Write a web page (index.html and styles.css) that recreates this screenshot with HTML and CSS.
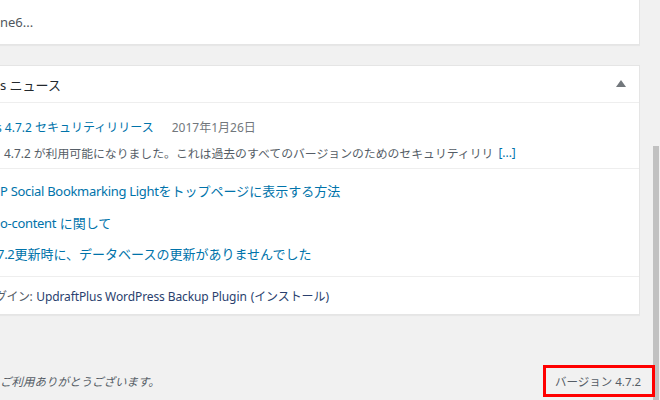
FILE: index.html
```html
<!DOCTYPE html>
<html lang="ja">
<head>
<meta charset="utf-8">
<link rel="stylesheet" href="styles.css">
</head>
<body>
<div class="page">
  <div class="main">
    <div class="card top-card">
      <span class="clip">ne6...</span>
    </div>
    <div class="card news">
      <div class="news-head">
        <h2 class="news-title"><span class="clip">s ニュース</span></h2>
        <svg class="toggle" width="10" height="7" viewBox="0 0 10 7"><path d="M0 7 L5 0 L10 7 Z" fill="#72777c"/></svg>
      </div>
      <div class="news-main">
        <div class="row-line">
          <a class="link" href="#"><span class="frag">s</span> 4.7.2 セキュリティリリース</a>
          <span class="date">2017年1月26日</span>
        </div>
        <div class="row-line desc">
          <span class="clip-d">4.7.2 が利用可能になりました。これは過去のすべてのバージョンのためのセキュリティリリ</span> <a class="more" href="#">[...]</a>
        </div>
      </div>
      <ul class="news-list">
        <li><a class="link" href="#"><span class="latin">P Social Bookmarking Light</span>をトップページに表示する方法</a></li>
        <li><a class="link" href="#"><span class="latin">o-content</span> に関して</a></li>
        <li><a class="link" href="#"><span class="latin cut">7.2</span>更新時に、データベースの更新がありませんでした</a></li>
      </ul>
      <div class="news-plugin">
        <span class="prefix">グイン:</span><a class="plugin-link" href="#">UpdraftPlus WordPress Backup Plugin</a> <a class="plugin-link install" href="#">(インストール)</a>
      </div>
    </div>
  </div>
  <div class="footer">
    <span class="thanks">ご利用ありがとうございます。</span>
    <span class="version">バージョン 4.7.2</span>
  </div>
  <div class="scrollbar"><div class="thumb"></div></div>
</div>
</body>
</html>
```

FILE: styles.css
```css
html, body {
  margin: 0;
  padding: 0;
}
body {
  background: #f1f1f1;
  font-family: "Noto Sans", "Noto Sans CJK JP", sans-serif;
  font-size: 12px;
  color: #555d66;
  width: 660px;
  height: 400px;
  overflow: hidden;
}
.page {
  position: relative;
  width: 660px;
  height: 400px;
}
.main {
  width: 640px;
}
.card {
  background: #fff;
  border-right: 1px solid #e5e5e5;
  border-bottom: 1px solid #e5e5e5;
  box-shadow: 0 1px 1px rgba(0,0,0,.04);
  box-sizing: border-box;
}
.top-card {
  height: 45px;
  display: flex;
  align-items: center;
  font-size: 13px;
  color: #50575e;
  padding-bottom: 1px;
}
.news {
  margin-top: 20px;
  border-top: 1px solid #e5e5e5;
  height: 250px;
}
.news-head {
  height: 36px;
  display: flex;
  align-items: center;
  justify-content: space-between;
  border-bottom: 1px solid #eee;
  padding-right: 13px;
}
.news-title {
  margin: 0;
  font-size: 13px;
  font-weight: normal;
  color: #23282d;
}
.toggle {
  display: block;
  margin-top: -1px;
}
.news-main {
  height: 66px;
  border-bottom: 1px solid #eee;
  box-sizing: border-box;
  padding-top: 12px;
}
.row-line {
  height: 24px;
  display: flex;
  align-items: center;
  white-space: nowrap;
}
.desc {
  margin-top: 1px;
  color: #555d66;
  font-size: 11.85px;
}
.link {
  color: #0073aa;
  text-decoration: none;
}
.frag {
  margin-left: -4px;
}
.date {
  color: #72777c;
  margin-left: 18px;
}
.clip-d {
  margin-left: 4px;
}
.more {
  color: #0073aa;
  text-decoration: none;
  margin-left: 5px;
}
.news-list {
  list-style: none;
  margin: 0;
  padding: 6px 0 0;
  height: 108px;
  border-bottom: 1px solid #eee;
  box-sizing: border-box;
  font-size: 13px;
}
.news-list li {
  height: 31.5px;
  display: flex;
  align-items: center;
  white-space: nowrap;
}
.latin {
  letter-spacing: -0.3px;
}
.cut {
  margin-left: -3px;
}
.news-plugin {
  height: 36px;
  display: flex;
  align-items: center;
  white-space: nowrap;
  color: #555d66;
  padding-top: 2px;
  box-sizing: border-box;
}
.prefix {
  margin-left: -5px;
  letter-spacing: -0.5px;
}
.plugin-link {
  color: #2a3f6e;
  text-decoration: none;
  margin-left: 4px;
  letter-spacing: -0.1px;
}
.install {
  margin-left: 4px;
}
.footer {
  display: flex;
  justify-content: space-between;
  align-items: center;
  margin-top: 50px;
  padding-right: 5px;
  font-size: 11.5px;
}
.thanks {
  font-style: italic;
  color: #555d66;
}
.version {
  border: 3px solid #ff0000;
  box-sizing: border-box;
  width: 112px;
  height: 32px;
  display: flex;
  align-items: center;
  padding-left: 9px;
  color: #555d66;
  font-size: 11.5px;
  position: relative;
  z-index: 2;
}
.scrollbar {
  position: absolute;
  top: 0;
  right: 0;
  width: 20px;
  height: 400px;
  background: #f1f1f1;
  z-index: 1;
}
.thumb {
  margin-top: 146px;
  margin-left: 13px;
  width: 6px;
  height: 254px;
  background: #c1c1c1;
}
```
